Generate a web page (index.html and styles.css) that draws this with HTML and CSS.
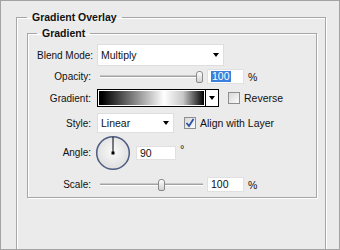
FILE: index.html
```html
<!DOCTYPE html>
<html lang="en">
<head>
    <meta charset="UTF-8">
    <title>Layer Style - Gradient Overlay</title>
    <link rel="stylesheet" href="styles.css">
</head>
<body>
    <div class="panel">
        <fieldset class="group outer">
            <legend>Gradient Overlay</legend>
            <fieldset class="group inner">
                <legend>Gradient</legend>

                <!-- blend mode -->
                <div class="row r-blend">
                    <label class="lbl">Blend Mode:</label>
                    <div class="select select-blend"><span>Multiply</span><i class="caret"></i></div>
                </div>

                <!-- opacity -->
                <div class="row r-opacity">
                    <label class="lbl">Opacity:</label>
                    <div class="slider">
                        <div class="track"></div>
                        <div class="thumb" style="--v:1"></div>
                    </div>
                    <div class="num"><span class="sel">100</span></div>
                    <span class="unit">%</span>
                </div>

                <!-- gradient picker -->
                <div class="row r-gradient">
                    <label class="lbl">Gradient:</label>
                    <div class="grad-pick">
                        <div class="grad"></div>
                        <div class="grad-btn"><i class="caret"></i></div>
                    </div>
                    <span class="check"></span>
                    <span class="check-lbl">Reverse</span>
                </div>

                <!-- style -->
                <div class="row r-style">
                    <label class="lbl">Style:</label>
                    <div class="select select-style"><span>Linear</span><i class="caret"></i></div>
                    <span class="check checked">
                        <svg width="10" height="10" viewBox="0 0 10 10"><path d="M1.5 5 L4 8 L8.5 1" fill="none" stroke="#2b4fa8" stroke-width="1.8"/></svg>
                    </span>
                    <span class="check-lbl">Align with Layer</span>
                </div>

                <!-- angle -->
                <div class="row r-angle">
                    <label class="lbl">Angle:</label>
                    <svg class="dial" width="36" height="36" viewBox="0 0 36 36">
                        <defs>
                            <radialGradient id="dialFill" cx="50%" cy="45%" r="55%">
                                <stop offset="0" stop-color="#fafafa"/>
                                <stop offset="1" stop-color="#dedede"/>
                            </radialGradient>
                        </defs>
                        <circle cx="18" cy="18" r="16.3" fill="url(#dialFill)" stroke="#4d5c80" stroke-width="1.5"/>
                        <line x1="18" y1="18" x2="18" y2="2" stroke="#000" stroke-width="1"/>
                        <rect x="16.5" y="16.5" width="3" height="3" fill="#000"/>
                    </svg>
                    <div class="num num-angle">90</div>
                    <span class="deg">°</span>
                </div>

                <!-- scale -->
                <div class="row r-scale">
                    <label class="lbl">Scale:</label>
                    <div class="slider">
                        <div class="track"></div>
                        <div class="thumb" style="--v:0.6"></div>
                    </div>
                    <div class="num">100</div>
                    <span class="unit">%</span>
                </div>
            </fieldset>
        </fieldset>
    </div>
</body>
</html>
```

FILE: styles.css
```css
* {
    margin: 0;
    padding: 0;
    box-sizing: border-box;
}

body {
    background: #ebebeb;
    font-family: "Liberation Sans", Arial, sans-serif;
    font-size: 10px;
    color: #111;
}

/* dialog panel */
.panel {
    width: 340px;
    height: 250px;
    border: 1px solid #a3a3a3;
    background: #ebebeb;
    padding: 9px 13px 0 15px;
    overflow: hidden;
}

/* etched group boxes */
.group {
    border: 1px solid #a6a6a6;
    box-shadow: 1px 1px 0 #fff, inset 1px 1px 0 #fff;
    min-inline-size: 0;
}

.group legend {
    font-weight: bold;
    font-size: 10.5px;
    line-height: 15px;
    padding: 0 5px;
}

.outer {
    min-height: 270px;
    padding: 1px 8px 0 10px;
}

.inner {
    padding: 3px 0 5px 9px;
}

/* form rows */
.row {
    display: flex;
    align-items: center;
}

.lbl {
    width: 54px;
    margin-right: 6px;
    text-align: right;
    white-space: nowrap;
}

.r-blend { height: 22px; }
.r-opacity { height: 15px; margin-top: 3px; }
.r-gradient { height: 18px; margin-top: 5px; }
.r-style { height: 20px; margin-top: 6px; }
.r-angle { height: 35px; margin-top: 2px; }
.r-scale { height: 15px; margin-top: 7px; }

/* dropdowns */
.select {
    height: 100%;
    background: #fff;
    border: 1px solid #dedede;
    display: flex;
    align-items: center;
    justify-content: space-between;
    padding: 0 4px 0 3px;
    font-size: 10.5px;
}

.select-blend { width: 127px; }
.select-style { width: 77px; }

.caret {
    width: 0;
    height: 0;
    border-left: 3.5px solid transparent;
    border-right: 3.5px solid transparent;
    border-top: 4px solid #000;
}

/* sliders */
.slider {
    position: relative;
    width: 103px;
    height: 14px;
    margin-left: 3px;
}

.track {
    margin-top: 5px;
    height: 3px;
    border-top: 1px solid #c8c8c8;
    border-bottom: 1px solid #fff;
    background: #a2a2a2;
}

.thumb {
    position: absolute;
    top: 1px;
    left: calc((100% - 7px) * var(--v));
    width: 7px;
    height: 12px;
    border: 1px solid #8a8a8a;
    border-radius: 3px 3px 2px 2px;
    background: linear-gradient(#fdfdfd, #d2d2d2);
}

/* number fields */
.num {
    width: 37px;
    height: 15px;
    margin-left: 4px;
    background: #fff;
    border: 1px solid #e0e0e0;
    padding-left: 3px;
    line-height: 13px;
    font-size: 10.5px;
}

.sel {
    background: #3b7fdc;
    color: #fff;
    padding: 0 1px;
    display: inline-block;
    line-height: 11px;
}

.unit {
    margin-left: 4px;
    font-size: 10.5px;
}

/* gradient picker */
.grad-pick {
    display: flex;
    height: 18px;
}

.grad {
    width: 109px;
    border: 1px solid #000;
    box-shadow: inset 0 0 0 1px #fff;
    padding: 1px;
    background: linear-gradient(to right, #000 0%, #000 3%, #fff 62%, #c8c8c8 80%, #000 100%) content-box;
}

.grad-btn {
    width: 13px;
    border: 1px solid #000;
    border-left: 0;
    background: #fff;
    display: flex;
    align-items: center;
    justify-content: center;
}

/* checkboxes */
.check {
    width: 12px;
    height: 12px;
    border: 1px solid #8e8e8e;
    background: linear-gradient(135deg, #d8d8d8, #fbfbfb);
    display: flex;
    align-items: center;
    justify-content: center;
}

.r-gradient .check { margin-left: 9px; }
.r-style .check { margin-left: 10px; }

.check-lbl {
    margin-left: 4px;
    font-size: 10.5px;
}

/* angle dial */
.dial {
    margin-left: -2px;
}

.num-angle {
    width: 40px;
    height: 14px;
    margin-left: 5px;
}

.deg {
    margin-left: 4px;
    align-self: flex-start;
    margin-top: 9px;
    font-size: 11px;
    line-height: 11px;
}
```
